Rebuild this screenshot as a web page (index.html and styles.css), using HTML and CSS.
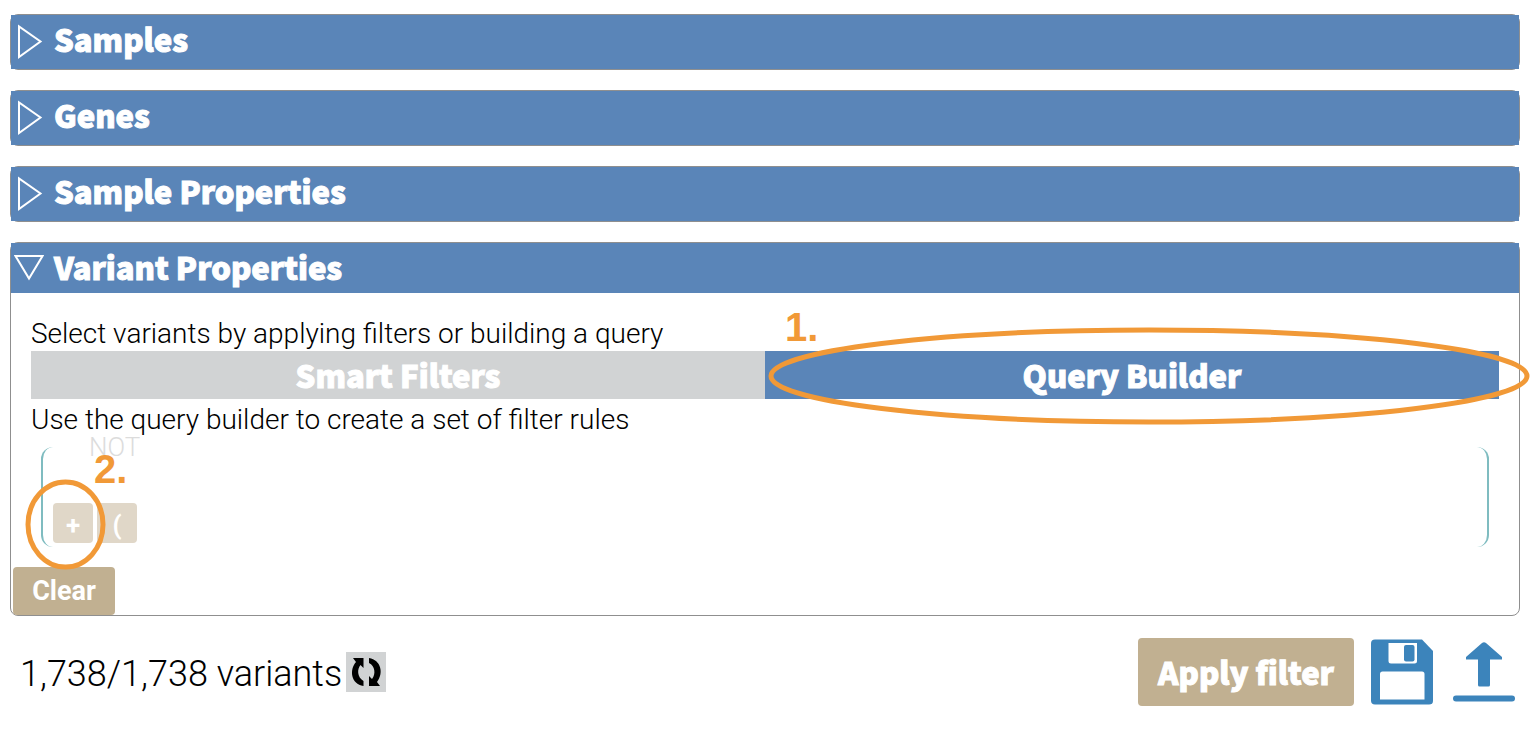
FILE: index.html
```
<!DOCTYPE html>
<html lang="en">
<head>
<meta charset="utf-8">
<title>Variant filters</title>
<link rel="stylesheet" href="styles.css">
</head>
<body>
<main class="page">
  <section class="panel panel-closed">
    <button class="panel-head" type="button" aria-expanded="false">
      <svg class="arrow" viewBox="0 0 30 38" aria-hidden="true"><path d="M5 4.500V35L26.500 19.500Z"/></svg>
      <span>Samples</span>
    </button>
  </section>
  <section class="panel panel-closed">
    <button class="panel-head" type="button" aria-expanded="false">
      <svg class="arrow" viewBox="0 0 30 38" aria-hidden="true"><path d="M5 4.500V35L26.500 19.500Z"/></svg>
      <span>Genes</span>
    </button>
  </section>
  <section class="panel panel-closed">
    <button class="panel-head" type="button" aria-expanded="false">
      <svg class="arrow" viewBox="0 0 30 38" aria-hidden="true"><path d="M5 4.500V35L26.500 19.500Z"/></svg>
      <span>Sample Properties</span>
    </button>
  </section>
  <section class="panel">
    <button class="panel-head" type="button" aria-expanded="true">
      <svg class="arrow" viewBox="0 0 30 38" aria-hidden="true"><path d="M1.500 6H28.500L15 28.500Z"/></svg>
      <span>Variant Properties</span>
    </button>
    <div class="panel-body">
      <p class="hint">Select variants by applying filters or building a query</p>
      <div class="tabs">
        <button class="tab" type="button">Smart Filters</button>
        <div class="tab-slot">
          <button class="tab tab-active" type="button">Query Builder</button>
          <span class="step step-one">1.</span>
          <div class="ring ring-tab"><svg aria-hidden="true"><ellipse cx="50%" cy="50%" rx="50%" ry="50%"/></svg></div>
        </div>
      </div>
      <p class="hint hint-query">Use the query builder to create a set of filter rules</p>
      <div class="group">
        <button class="not" type="button">NOT</button>
        <div class="group-actions">
          <button class="small-btn" type="button">+</button>
          <button class="small-btn" type="button">(</button>
        </div>
        <span class="step step-two">2.</span>
        <div class="ring ring-add"><svg aria-hidden="true"><ellipse cx="50%" cy="50%" rx="50%" ry="50%"/></svg></div>
      </div>
    </div>
    <button class="clear" type="button">Clear</button>
  </section>
  <footer class="footer">
    <span class="count">1,738/1,738 variants</span>
    <button class="refresh" type="button" aria-label="Refresh">
      <svg viewBox="0 0 40 40" aria-hidden="true"><path d="M7 6H17.500V16L14.500 13C11 17 11 25 17.500 29V34C5 32 3 18 10 10ZM23 6C35 8 38 21 31 30L34 34H23V24L26 27C30 22 29 14 23 11Z"/></svg>
    </button>
    <div class="actions">
      <button class="apply" type="button">Apply filter</button>
      <button class="icon-btn" type="button" aria-label="Save">
        <svg viewBox="0 0 62 66" aria-hidden="true">
          <path class="ink" d="M4 .5H51L62 12V62Q62 65.500 58 65.500H4Q0 65.500 0 61.500V4.500Q0 .5 4 .5Z"/>
          <path class="paper" d="M17.500 4H46V22Q46 24.500 43.500 24.500H20Q17.500 24.500 17.500 22ZM9 60.500V35Q9 32.500 11.500 32.500H51Q53.500 32.500 53.500 35V60.500Z"/>
          <rect class="ink" x="33" y="6" width="10.500" height="16.500" rx="2"/>
        </svg>
      </button>
      <button class="icon-btn" type="button" aria-label="Upload">
        <svg viewBox="0 0 62 66" aria-hidden="true">
          <path class="ink" d="M29 4Q31 2.500 33 4L49 18V20.500H37V46Q37 47.500 35.500 47.500H26.500Q25 47.500 25 46V20.500H13V18Z"/>
          <rect class="ink" x="0" y="56.500" width="62" height="6" rx="3"/>
        </svg>
      </button>
    </div>
  </footer>
</main>
</body>
</html>
```
FILE: styles.css
```
* {
  box-sizing: border-box;
}

body {
  margin: 0;
  background: #fff;
  color: #000;
  font-family: Roboto, "Liberation Sans", sans-serif;
  font-weight: 300;
}

button {
  margin: 0;
  padding: 0;
  border: 0;
  background: none;
  color: inherit;
  font: inherit;
  cursor: pointer;
}

svg {
  display: block;
}

.page {
  display: flex;
  flex-direction: column;
  gap: 20px;
  padding: 14px 14px 0 10px;
}

.panel {
  border: 1px solid #8f8f8f;
  border-radius: 8px;
}

.panel-closed {
  padding-bottom: 4px;
}

.panel-head,
.tab,
.apply {
  color: #fff;
  font: 900 31px/48px "Noto Sans CJK JP", "Noto Sans", sans-serif;
  -webkit-text-stroke: 1px #fff;
}

.panel-head {
  display: flex;
  align-items: flex-start;
  gap: 10px;
  width: 100%;
  height: 50px;
  padding-left: 3px;
  background: #5a85b8;
  text-align: left;
}

.panel-closed .panel-head {
  box-shadow: 0 4px #5a85b8;
}

.arrow {
  width: 30px;
  height: 38px;
  margin-top: 7px;
  fill: none;
  stroke: #fff;
  stroke-width: 2;
}

.panel-body {
  padding: 24px 20px 20px;
}

.hint {
  margin: 0;
  font-size: 28px;
  line-height: 34px;
}

.hint-query {
  margin-top: 4px;
}

.tabs {
  display: grid;
  grid-template-columns: 1fr 1fr;
}

.tab-slot {
  position: relative;
}

.tab {
  width: 100%;
  height: 48px;
  background: #d1d3d4;
}

.tab-active {
  background: #5a85b8;
}

.group {
  position: relative;
  display: flex;
  flex-direction: column;
  justify-content: space-between;
  align-items: flex-start;
  height: 100px;
  margin: 10px 10px 0;
  padding: 0 10px 4px;
  border: solid #7fbcc0;
  border-width: 0 2px;
  border-radius: 12px;
}

.not {
  margin-left: 36px;
  color: #dcdcdc;
  font-size: 26px;
  line-height: 0;
}

.group-actions {
  display: flex;
  gap: 4px;
}

.small-btn {
  width: 40px;
  height: 40px;
  padding-top: 4px;
  border-radius: 4px;
  background: #e0d7c8;
  color: #fff;
  font-size: 26px;
  font-weight: 700;
  line-height: 36px;
}

.clear {
  display: block;
  width: 102px;
  height: 48px;
  margin-left: 2px;
  border-radius: 4px;
  background: #c1b091;
  color: #fff;
  font-size: 27px;
  font-weight: 700;
}

.step {
  position: absolute;
  color: #f19937;
  font: 700 40px/40px "Liberation Sans", Arial, sans-serif;
  pointer-events: none;
}

.step-one {
  top: -44px;
  left: 20px;
}

.step-two {
  top: 2px;
  left: 51px;
}

.ring {
  position: absolute;
  pointer-events: none;
}

.ring svg {
  width: 100%;
  height: 100%;
  overflow: visible;
  fill: none;
  stroke: #f19937;
  stroke-width: 5;
}

.ring-tab {
  inset: -21px -28px -23px 6px;
}

.ring-add {
  top: 35px;
  left: -15px;
  width: 75px;
  height: 85px;
}

.footer {
  display: flex;
  align-items: center;
  gap: 4px;
  margin-top: 2px;
  padding-left: 10px;
}

.count {
  padding-top: 4px;
  font-size: 36px;
  line-height: 44px;
}

.refresh {
  width: 40px;
  height: 40px;
  background: #d1d3d4;
}

.actions {
  display: flex;
  align-items: center;
  gap: 20px;
  margin-left: auto;
  padding-right: 5px;
}

.apply {
  height: 68px;
  margin-right: -3px;
  padding: 0 20px;
  border-radius: 4px;
  background: #c1b091;
}

.icon-btn svg {
  width: 62px;
  height: 66px;
}

.ink {
  fill: #3c84bb;
}

.paper {
  fill: #fff;
}
```
